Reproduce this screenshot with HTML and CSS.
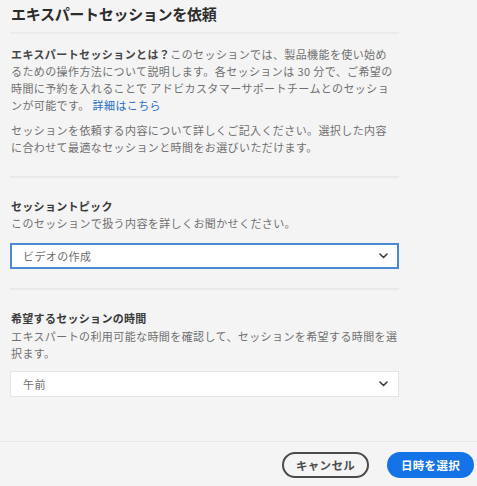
FILE: index.html
```html
<!DOCTYPE html>
<html lang="ja">
<head>
<meta charset="utf-8">
<link rel="stylesheet" href="styles.css">
</head>
<body>
<div class="dialog">
  <div class="content">
    <h1 class="title">エキスパートセッションを依頼</h1>
    <div class="intro">
      <p class="text"><b class="lead">エキスパートセッションとは？</b>このセッションでは、製品機能を使い始め<br>るための操作方法について説明します。各セッションは 30 分で、ご希望の<br>時間に予約を入れることで アドビカスタマーサポートチームとのセッショ<br>ンが可能です。 <a class="link" href="#">詳細はこちら</a></p>
      <p class="text second">セッションを依頼する内容について詳しくご記入ください。選択した内容<br>に合わせて最適なセッションと時間をお選びいただけます。</p>
    </div>
    <div class="section topic">
      <h2 class="label">セッショントピック</h2>
      <p class="text sub">このセッションで扱う内容を詳しくお聞かせください。</p>
      <div class="select focused">
        <span class="value">ビデオの作成</span>
        <svg class="chev" width="9" height="6" viewBox="0 0 9 6"><polyline points="1,1 4.5,4.5 8,1" fill="none" stroke="#3c3c3c" stroke-width="1.6" stroke-linecap="round" stroke-linejoin="round"/></svg>
      </div>
    </div>
    <div class="section time">
      <h2 class="label">希望するセッションの時間</h2>
      <p class="text sub">エキスパートの利用可能な時間を確認して、セッションを希望する時間を選<br>択ます。</p>
      <div class="select plain">
        <span class="value">午前</span>
        <svg class="chev" width="9" height="6" viewBox="0 0 9 6"><polyline points="1,1 4.5,4.5 8,1" fill="none" stroke="#3c3c3c" stroke-width="1.6" stroke-linecap="round" stroke-linejoin="round"/></svg>
      </div>
    </div>
  </div>
  <div class="footer">
    <button class="btn cancel">キャンセル</button>
    <button class="btn primary">日時を選択</button>
  </div>
</div>
</body>
</html>
```

FILE: styles.css
```css
html, body {
  margin: 0;
  padding: 0;
  background: #f4f4f4;
}
body {
  width: 477px;
  height: 486px;
  overflow: hidden;
  font-family: "Noto Sans CJK JP", "Noto Sans", sans-serif;
  color: #6e6e6e;
}
.dialog {
  display: flex;
  flex-direction: column;
}
.content {
  margin-left: 10px;
  width: 389px;
}
.title {
  margin: 0;
  padding: 4px 0 8px 1px;
  font-size: 15px;
  line-height: 20px;
  font-weight: 700;
  letter-spacing: -0.3px;
  color: #2c2c2c;
  border-bottom: 2px solid #ebebeb;
}
.intro {
  padding: 12px 0 20px;
  border-bottom: 2px solid #e9e9e9;
}
.text {
  margin: 0;
  padding-left: 1px;
  width: 396px;
  font-size: 11px;
  line-height: 17px;
  letter-spacing: 0.4px;
  color: #707070;
  white-space: nowrap;
}
.second {
  margin-top: 8px;
}
.lead {
  color: #464646;
  font-weight: 700;
}
.link {
  color: #2d6fc6;
  text-decoration: none;
}
.section {
  padding-top: 20px;
}
.topic {
  padding-bottom: 19px;
  border-bottom: 2px solid #e9e9e9;
}
.label {
  margin: 0;
  padding-left: 1px;
  font-size: 11px;
  line-height: 17px;
  font-weight: 700;
  letter-spacing: 0.3px;
  color: #3a3a3a;
}
.time .sub {
  margin-top: 1px;
}
.select {
  box-sizing: border-box;
  height: 26px;
  background: #ffffff;
  display: flex;
  align-items: center;
  justify-content: space-between;
  font-size: 11px;
  letter-spacing: 0.4px;
  color: #6e6e6e;
}
.focused {
  margin-top: 11px;
  border: 2px solid #4a8bd3;
  padding: 0 9px 0 11px;
}
.plain {
  margin-top: 9px;
  border: 1px solid #e4e4e4;
  padding: 0 10px 0 12px;
}
.footer {
  margin-top: 44px;
  border-top: 1px solid #e8e8e8;
  display: flex;
  justify-content: flex-end;
  gap: 18px;
  padding: 10px 3px 0 0;
}
.btn {
  box-sizing: border-box;
  width: 87px;
  height: 26px;
  border-radius: 13px;
  font-family: "Noto Sans CJK JP", "Noto Sans", sans-serif;
  font-size: 11.5px;
  font-weight: 700;
  letter-spacing: 0.3px;
  padding: 0;
  display: flex;
  align-items: center;
  justify-content: center;
}
.cancel {
  background: transparent;
  border: 2px solid #4b4b4b;
  color: #4b4b4b;
}
.primary {
  background: #1473e6;
  border: none;
  color: #ffffff;
}
```
